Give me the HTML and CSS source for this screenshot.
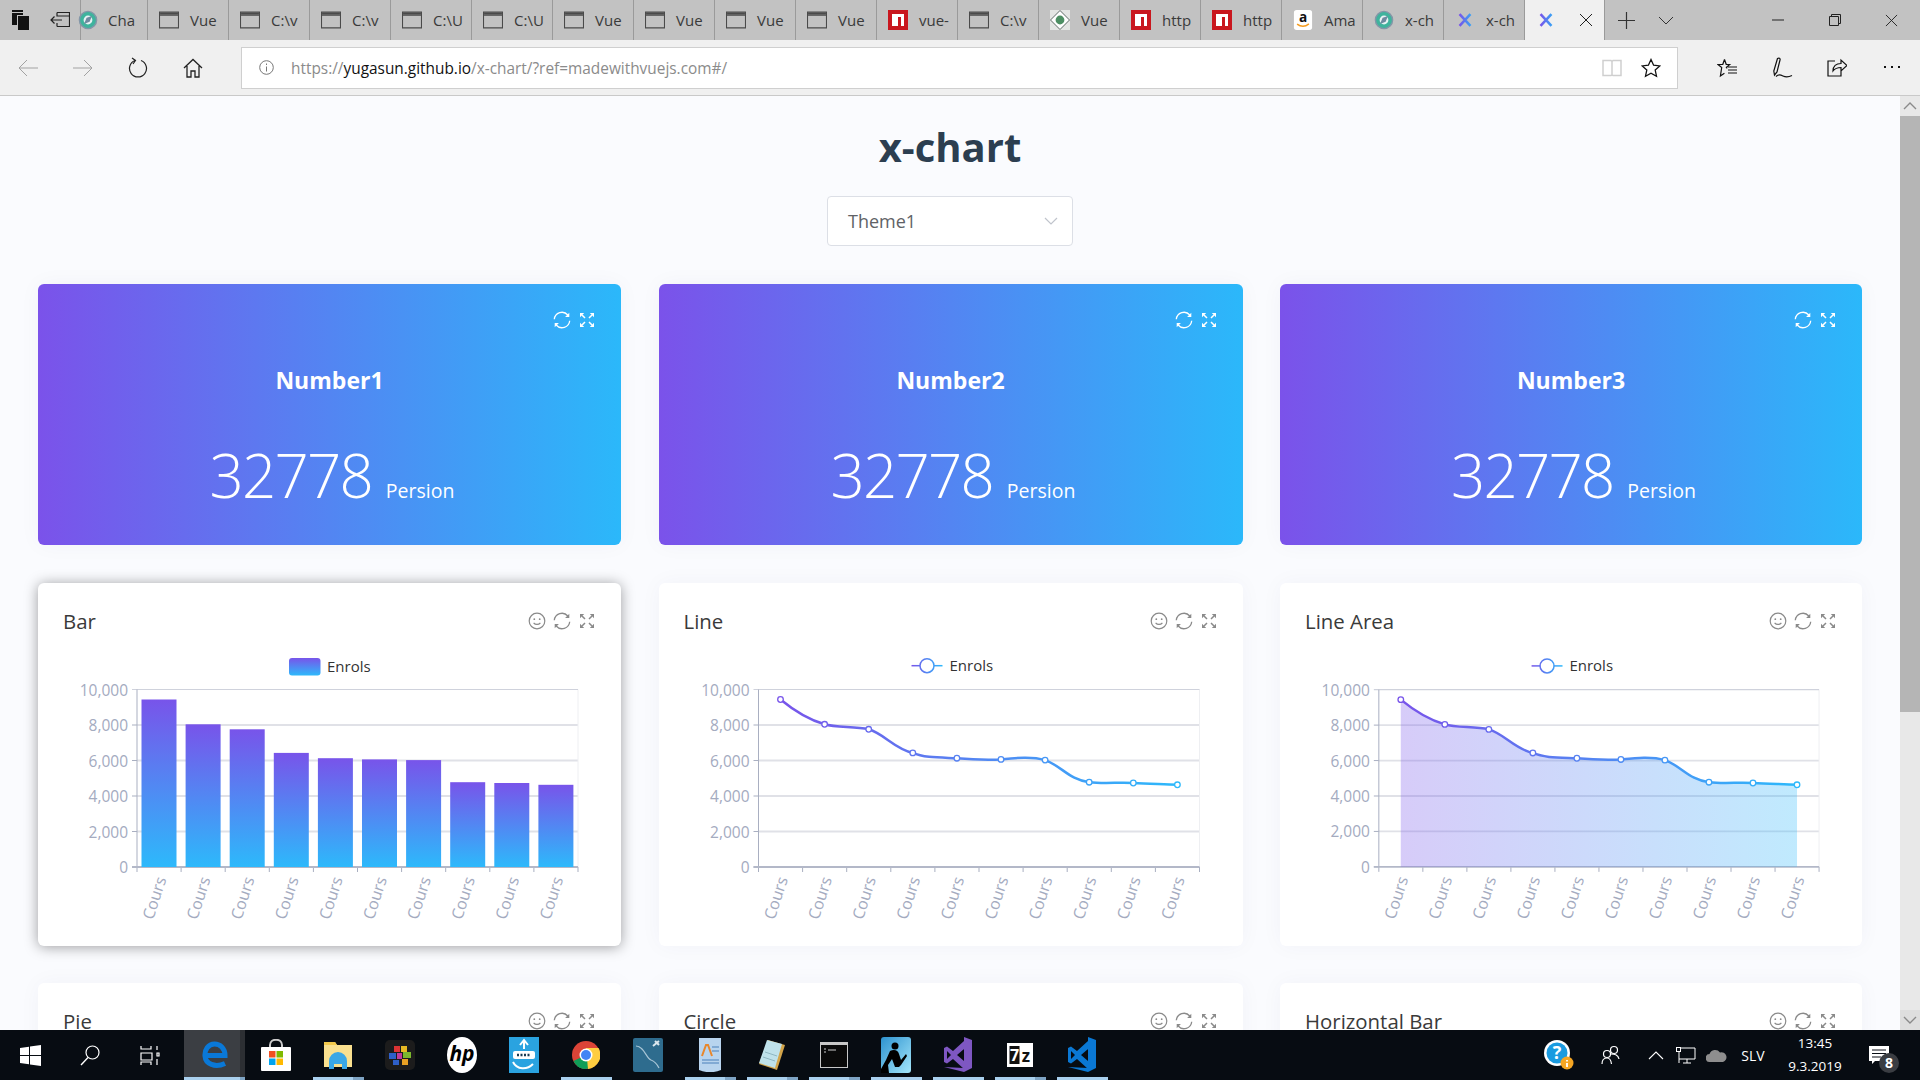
FILE: index.html
```html
<!DOCTYPE html>
<html lang="en">
<head>
    <meta charset="UTF-8">
    <meta name="viewport" content="width=device-width, initial-scale=1.0">
    <title>x-chart</title>
    <link rel="stylesheet" href="styles.css">
</head>
<body>

    <!-- shared icons and chart parts -->
    <svg class="defs" aria-hidden="true">
        <defs>
            <linearGradient id="g-bar" x1="0" y1="0" x2="0" y2="1">
                <stop offset="0" stop-color="#7854ea"/>
                <stop offset="1" stop-color="#2db9fb"/>
            </linearGradient>
            <linearGradient id="g-line" gradientUnits="userSpaceOnUse" x1="121" y1="0" x2="518" y2="0">
                <stop offset="0" stop-color="#7854ea"/>
                <stop offset="1" stop-color="#2db9fb"/>
            </linearGradient>
            <linearGradient id="g-area" gradientUnits="userSpaceOnUse" x1="121" y1="0" x2="518" y2="0">
                <stop offset="0" stop-color="#7854ea" stop-opacity=".3"/>
                <stop offset="1" stop-color="#2db9fb" stop-opacity=".3"/>
            </linearGradient>
            <linearGradient id="g-legend" gradientUnits="userSpaceOnUse" x1="252" y1="0" x2="283" y2="0">
                <stop offset="0" stop-color="#7854ea"/>
                <stop offset="1" stop-color="#2db9fb"/>
            </linearGradient>
            <linearGradient id="g-x" x1="0" y1="0" x2="1" y2="0">
                <stop offset="0" stop-color="#7854ea"/>
                <stop offset="1" stop-color="#3a9ff5"/>
            </linearGradient>

            <symbol id="i-smile" viewBox="0 0 18 18">
                <circle cx="9" cy="9" r="7.8" fill="none" stroke="currentColor" stroke-width="1.2"/>
                <circle cx="6.3" cy="7.2" r=".9" fill="currentColor"/>
                <circle cx="11.7" cy="7.2" r=".9" fill="currentColor"/>
                <path d="M5.6 10.8c1.8 2.2 5 2.2 6.8 0" fill="none" stroke="currentColor" stroke-width="1.2"/>
            </symbol>
            <symbol id="i-refresh" viewBox="0 0 18 18">
                <path d="M1.300 8.300A7.700 7.700 0 0 1 14.800 4M16.700 9.700A7.700 7.700 0 0 1 3.200 14" fill="none" stroke="currentColor" stroke-width="1.300"/>
                <path d="M16.300 1.800v4.200h-4.200zM1.700 16.200V12h4.200z" fill="currentColor"/>
            </symbol>
            <symbol id="i-expand" viewBox="0 0 18 18">
                <path d="M2 2h4.200L2 6.200zM16 2v4.200L11.800 2zM2 16v-4.200L6.200 16zM16 16h-4.200l4.200-4.200z" fill="currentColor"/>
                <path d="M4 4l3 3M14 4l-3 3M4 14l3-3M14 14l-3-3" fill="none" stroke="currentColor" stroke-width="1.500"/>
            </symbol>

            <symbol id="i-win" viewBox="0 0 19 16">
                <path d="M.5.5h18v15H.5zM.5 3.500h18" fill="none" stroke="#4a4a4a" stroke-width="1"/>
                <path d="M1 1h17v2H1z" fill="#4a4a4a"/>
            </symbol>
            <symbol id="i-npm" viewBox="0 0 20 20">
                <path d="M0 0h20v20H0z" fill="#c9171e"/>
                <path d="M4 4h12v12h-3V7h-3v9H4z" fill="#fff"/>
            </symbol>
            <symbol id="i-compass" viewBox="0 0 20 20">
                <circle cx="10" cy="10" r="8.6" fill="#3fb39d" stroke="#8496a8" stroke-width="1.4"/>
                <circle cx="10" cy="10" r="4.4" fill="#e8f2f4"/>
                <path d="M6 14l2.600-6.200L14 6l-2.400 5.800z" fill="#6f8aa0"/>
            </symbol>
            <symbol id="i-diamond" viewBox="0 0 20 20">
                <path d="M0 0h20v20H0z" fill="#e4e6e4"/>
                <path d="M10 .5l9.500 9.500-9.500 9.500L.5 10z" fill="#fff" stroke="#5f6b66"/>
                <circle cx="10" cy="10" r="4.400" fill="#4d8f63"/>
            </symbol>
            <symbol id="i-amazon" viewBox="0 0 20 22">
                <rect width="20" height="22" rx="3" fill="#fff"/>
                <text x="10" y="13.5" text-anchor="middle" class="amazon-a">a</text>
                <path d="M3.500 15.500c4 3 9 3 13-.2" fill="none" stroke="#f59b1d" stroke-width="1.600"/>
            </symbol>
            <symbol id="i-x" viewBox="-3 -3 22 22">
                <path d="M2 1.500l12 13M14 1.500L2 14.500" fill="none" stroke="url(#g-x)" stroke-width="2.800"/>
            </symbol>
            <symbol id="i-cross" viewBox="0 0 14 14">
                <path d="M1 1l12 12M13 1L1 13" fill="none" stroke="#222" stroke-width="1"/>
            </symbol>

            <g id="axes">
                <path d="M99 91H540M99 126.500H540M99 162H540M99 197.500H540" fill="none" stroke="#e0e1e7" stroke-width="1.800"/>
                <path d="M540 55.500V233" fill="none" stroke="#eeeff2"/>
                <path d="M94 55.500H540" fill="none" stroke="#cfd2dc" stroke-width="1.200"/>
                <path d="M99 55.500V238M94 91H99M94 126.500H99M94 162H99M94 197.500H99M94 233H99M143.100 233v5M187.200 233v5M231.300 233v5M275.400 233v5M319.500 233v5M363.600 233v5M407.700 233v5M451.800 233v5M495.900 233v5M540 233v5" fill="none" stroke="#a9afc1"/>
                <path d="M94 233H540" fill="none" stroke="#b3b8c8" stroke-width="1.800"/>
                <text x="90" y="61.500" class="tick end">10,000</text>
                <text x="90" y="97" class="tick end">8,000</text>
                <text x="90" y="132.500" class="tick end">6,000</text>
                <text x="90" y="168" class="tick end">4,000</text>
                <text x="90" y="203.500" class="tick end">2,000</text>
                <text x="90" y="239" class="tick end">0</text>
                <text transform="translate(128.500 245) rotate(-72)" class="tick end cat">Cours</text>
                <text transform="translate(172.600 245) rotate(-72)" class="tick end cat">Cours</text>
                <text transform="translate(216.700 245) rotate(-72)" class="tick end cat">Cours</text>
                <text transform="translate(260.800 245) rotate(-72)" class="tick end cat">Cours</text>
                <text transform="translate(304.900 245) rotate(-72)" class="tick end cat">Cours</text>
                <text transform="translate(349 245) rotate(-72)" class="tick end cat">Cours</text>
                <text transform="translate(393.100 245) rotate(-72)" class="tick end cat">Cours</text>
                <text transform="translate(437.200 245) rotate(-72)" class="tick end cat">Cours</text>
                <text transform="translate(481.300 245) rotate(-72)" class="tick end cat">Cours</text>
                <text transform="translate(525.400 245) rotate(-72)" class="tick end cat">Cours</text>
            </g>
            <g id="line-legend">
                <path d="M252 31.700h31" stroke="url(#g-legend)" stroke-width="1.500"/>
                <circle cx="267.500" cy="31.700" r="7" fill="#fff" stroke="url(#g-legend)" stroke-width="1.500"/>
                <text x="290" y="37" class="legend">Enrols</text>
            </g>
            <g id="line-points" fill="#fff" stroke="url(#g-line)" stroke-width="1.300">
                <circle cx="121" cy="65.500" r="2.800"/>
                <circle cx="165.100" cy="90.300" r="2.800"/>
                <circle cx="209.200" cy="95.300" r="2.800"/>
                <circle cx="253.300" cy="118.900" r="2.800"/>
                <circle cx="297.400" cy="124.200" r="2.800"/>
                <circle cx="341.500" cy="125.400" r="2.800"/>
                <circle cx="385.600" cy="126.100" r="2.800"/>
                <circle cx="429.700" cy="148.200" r="2.800"/>
                <circle cx="473.800" cy="149" r="2.800"/>
                <circle cx="517.900" cy="150.800" r="2.800"/>
            </g>
        </defs>
    </svg>

    <div class="tabbar">
        <div class="tab-tool">
            <svg width="17" height="20" viewBox="0 0 17 20"><path d="M0 0h11v2H0zM0 3h11v2H5v10H0z" fill="#111"/><path d="M6 6h11v14H6zM6 6h11v2H6z" fill="#111"/></svg>
        </div>
        <div class="tab-tool">
            <svg width="20" height="16" viewBox="0 0 20 16"><path d="M7 .5h12.500v14H7M7 .5v4M7 11v3.500M7 4h12.500M12 8H1M4.500 4.500L1 8l3.500 3.500" fill="none" stroke="#222" stroke-width="1.200"/></svg>
        </div>
        <div class="tab tab-first"><svg class="tab-icon"><use href="#i-compass"/></svg><span>Cha</span></div>
        <div class="tab"><svg class="tab-icon"><use href="#i-win"/></svg><span>Vue</span></div>
        <div class="tab"><svg class="tab-icon"><use href="#i-win"/></svg><span>C:\v</span></div>
        <div class="tab"><svg class="tab-icon"><use href="#i-win"/></svg><span>C:\v</span></div>
        <div class="tab"><svg class="tab-icon"><use href="#i-win"/></svg><span>C:\U</span></div>
        <div class="tab"><svg class="tab-icon"><use href="#i-win"/></svg><span>C:\U</span></div>
        <div class="tab"><svg class="tab-icon"><use href="#i-win"/></svg><span>Vue</span></div>
        <div class="tab"><svg class="tab-icon"><use href="#i-win"/></svg><span>Vue</span></div>
        <div class="tab"><svg class="tab-icon"><use href="#i-win"/></svg><span>Vue</span></div>
        <div class="tab"><svg class="tab-icon"><use href="#i-win"/></svg><span>Vue</span></div>
        <div class="tab"><svg class="tab-icon"><use href="#i-npm"/></svg><span>vue-</span></div>
        <div class="tab"><svg class="tab-icon"><use href="#i-win"/></svg><span>C:\v</span></div>
        <div class="tab"><svg class="tab-icon"><use href="#i-diamond"/></svg><span>Vue</span></div>
        <div class="tab"><svg class="tab-icon"><use href="#i-npm"/></svg><span>http</span></div>
        <div class="tab"><svg class="tab-icon"><use href="#i-npm"/></svg><span>http</span></div>
        <div class="tab"><svg class="tab-icon"><use href="#i-amazon"/></svg><span>Ama</span></div>
        <div class="tab"><svg class="tab-icon"><use href="#i-compass"/></svg><span>x-ch</span></div>
        <div class="tab"><svg class="tab-icon"><use href="#i-x"/></svg><span>x-ch</span></div>
        <div class="tab tab-active">
            <svg class="tab-icon"><use href="#i-x"/></svg>
            <svg class="tab-close"><use href="#i-cross"/></svg>
        </div>
        <div class="tab-tool tab-new">
            <svg width="17" height="17" viewBox="0 0 17 17"><path d="M0 8.500h17M8.500 0v17" stroke="#333" stroke-width="1.200"/></svg>
        </div>
        <div class="tab-tool">
            <svg width="16" height="9" viewBox="0 0 16 9"><path d="M1 1l7 7 7-7" fill="none" stroke="#333" stroke-width="1"/></svg>
        </div>
        <div class="win-controls">
            <div class="win-btn"><svg width="12" height="2" viewBox="0 0 12 2"><path d="M0 1h12" stroke="#222"/></svg></div>
            <div class="win-btn"><svg width="12" height="12" viewBox="0 0 12 12"><path d="M.5 2.500h9v9h-9zM2.500 2.500v-2h9v9h-2" fill="none" stroke="#222"/></svg></div>
            <div class="win-btn"><svg width="13" height="13"><use href="#i-cross"/></svg></div>
        </div>
    </div>

    <div class="toolbar">
        <div class="tool-btn">
            <svg width="20" height="18" viewBox="0 0 20 18"><path d="M20 9H1M9 1L1 9l8 8" fill="none" stroke="#a2a2a2"/></svg>
        </div>
        <div class="tool-btn">
            <svg width="20" height="18" viewBox="0 0 20 18"><path d="M0 9h19M11 1l8 8-8 8" fill="none" stroke="#a2a2a2"/></svg>
        </div>
        <div class="tool-btn">
            <svg width="20" height="22" viewBox="0 0 20 22"><path d="M13 3.500a8.500 8.500 0 1 1-6 0M4 1l3.500 2.500L5 7" fill="none" stroke="#222" stroke-width="1.200"/></svg>
        </div>
        <div class="tool-btn">
            <svg width="20" height="20" viewBox="0 0 20 20"><path d="M1 10l9-8.500 9 8.500M4 8v11h4v-6h4v6h4V8" fill="none" stroke="#222" stroke-width="1.300"/></svg>
        </div>
        <div class="urlbar">
            <svg class="url-info" width="15" height="15" viewBox="0 0 15 15"><circle cx="7.500" cy="7.500" r="6.800" fill="none" stroke="#777"/><path d="M7.500 6.500v5M7.500 3.500v1.500" stroke="#777"/></svg>
            <div class="url-text">https://<b>yugasun.github.io</b>/x-chart/?ref=madewithvuejs.com#/</div>
            <svg class="url-read" width="20" height="18" viewBox="0 0 20 18"><path d="M1 1.500h8l1 1 1-1h8v15h-8l-1-.5-1 .5H1zM10 2.500V16" fill="none" stroke="#cfcfcf" stroke-width="1.500"/></svg>
            <svg class="url-star" width="20" height="20" viewBox="0 0 20 20"><path d="M10 1.500l2.600 5.700 6.200.7-4.600 4.200 1.300 6.100L10 15.200l-5.500 3 1.300-6.100-4.600-4.200 6.200-.7z" fill="none" stroke="#111" stroke-width="1.300"/></svg>
        </div>
        <div class="tool-btn tool-first">
            <svg width="20" height="20" viewBox="0 0 20 20"><path d="M7.500 1.500l1.700 4.800 3.500.2-3.300 2.800.8 1M7.500 1.500L5.800 6.300 1 6.500l3.700 3L3.400 18l4-2.800M11 9h9M11 12h9M11 15h9" fill="none" stroke="#111" stroke-width="1.200"/></svg>
        </div>
        <div class="tool-btn">
            <svg width="22" height="22" viewBox="0 0 22 22"><path d="M6.500 1.500c1.500-1 3 0 2.500 1.500L6 15l-2.500 3-.7-4zM5 19.500c3-3 5-1.500 7-.5s5 1.500 9-.5" fill="none" stroke="#111" stroke-width="1.200"/></svg>
        </div>
        <div class="tool-btn">
            <svg width="20" height="20" viewBox="0 0 20 20"><path d="M8 3H1v15h13v-5M6 13c0-5 3-7.500 8-7.500V2l6 5.500-6 5.500V9.500c-3 0-6 1-8 3.500z" fill="none" stroke="#111" stroke-width="1.200"/></svg>
        </div>
        <div class="tool-btn">
            <svg width="16" height="3" viewBox="0 0 16 3"><path d="M0 0h2v2H0zM7 0h2v2H7zM14 0h2v2h-2z" fill="#111"/></svg>
        </div>
    </div>

    <div class="viewport">
        <main class="page">
            <h1 class="page-title">x-chart</h1>
            <div class="theme-select">
                <span>Theme1</span>
                <svg width="14" height="8" viewBox="0 0 14 8"><path d="M1 1l6 6 6-6" fill="none" stroke="#c0c4cc" stroke-width="1.200"/></svg>
            </div>

            <div class="card-grid">
                <section class="card number-card">
                    <div class="card-icons">
                        <svg class="ico"><use href="#i-refresh"/></svg>
                        <svg class="ico"><use href="#i-expand"/></svg>
                    </div>
                    <h3 class="number-title">Number1</h3>
                    <div class="number-value">32778<span class="number-unit">Persion</span></div>
                </section>
                <section class="card number-card">
                    <div class="card-icons">
                        <svg class="ico"><use href="#i-refresh"/></svg>
                        <svg class="ico"><use href="#i-expand"/></svg>
                    </div>
                    <h3 class="number-title">Number2</h3>
                    <div class="number-value">32778<span class="number-unit">Persion</span></div>
                </section>
                <section class="card number-card">
                    <div class="card-icons">
                        <svg class="ico"><use href="#i-refresh"/></svg>
                        <svg class="ico"><use href="#i-expand"/></svg>
                    </div>
                    <h3 class="number-title">Number3</h3>
                    <div class="number-value">32778<span class="number-unit">Persion</span></div>
                </section>

                <section class="card chart-card card-hover">
                    <div class="chart-head">
                        <h3>Bar</h3>
                        <div class="card-icons">
                            <svg class="ico"><use href="#i-smile"/></svg>
                            <svg class="ico"><use href="#i-refresh"/></svg>
                            <svg class="ico"><use href="#i-expand"/></svg>
                        </div>
                    </div>
                    <svg class="chart" viewBox="0 0 583 312">
                        <use href="#axes"/>
                        <rect x="251" y="24" width="31.500" height="17.500" rx="3" fill="url(#g-bar)"/>
                        <text x="289" y="38" class="legend">Enrols</text>
                        <g fill="url(#g-bar)">
                            <rect x="103.500" y="65.500" width="35" height="167.500"/>
                            <rect x="147.600" y="90.300" width="35" height="142.700"/>
                            <rect x="191.700" y="95.300" width="35" height="137.700"/>
                            <rect x="235.800" y="118.900" width="35" height="114.100"/>
                            <rect x="279.900" y="124.200" width="35" height="108.800"/>
                            <rect x="324" y="125.400" width="35" height="107.600"/>
                            <rect x="368.100" y="126.100" width="35" height="106.900"/>
                            <rect x="412.200" y="148.200" width="35" height="84.800"/>
                            <rect x="456.300" y="149" width="35" height="84"/>
                            <rect x="500.400" y="150.800" width="35" height="82.200"/>
                        </g>
                    </svg>
                </section>

                <section class="card chart-card">
                    <div class="chart-head">
                        <h3>Line</h3>
                        <div class="card-icons">
                            <svg class="ico"><use href="#i-smile"/></svg>
                            <svg class="ico"><use href="#i-refresh"/></svg>
                            <svg class="ico"><use href="#i-expand"/></svg>
                        </div>
                    </div>
                    <svg class="chart" viewBox="0 0 583 312">
                        <use href="#axes"/>
                        <use href="#line-legend"/>
                        <path d="M121 65.500C135 77 150 86 165.100 90.300C177 94 195 92 209.200 95.300C225 100 235 115 253.300 118.900C265 124 280 123.500 297.400 124.200C312 125.500 328 126 341.500 125.400C355 124 372 122 385.600 126.100C402 132 410 146 429.700 148.200C445 150 460 148 473.800 149C490 150 505 150 517.900 150.800" fill="none" stroke="url(#g-line)" stroke-width="2.500"/>
                        <use href="#line-points"/>
                    </svg>
                </section>

                <section class="card chart-card">
                    <div class="chart-head">
                        <h3>Line Area</h3>
                        <div class="card-icons">
                            <svg class="ico"><use href="#i-smile"/></svg>
                            <svg class="ico"><use href="#i-refresh"/></svg>
                            <svg class="ico"><use href="#i-expand"/></svg>
                        </div>
                    </div>
                    <svg class="chart" viewBox="0 0 583 312">
                        <use href="#axes"/>
                        <use href="#line-legend"/>
                        <path d="M121 65.500C135 77 150 86 165.100 90.300C177 94 195 92 209.200 95.300C225 100 235 115 253.300 118.900C265 124 280 123.500 297.400 124.200C312 125.500 328 126 341.500 125.400C355 124 372 122 385.600 126.100C402 132 410 146 429.700 148.200C445 150 460 148 473.800 149C490 150 505 150 517.900 150.800V233H121Z" fill="url(#g-area)"/>
                        <path d="M121 65.500C135 77 150 86 165.100 90.300C177 94 195 92 209.200 95.300C225 100 235 115 253.300 118.900C265 124 280 123.500 297.400 124.200C312 125.500 328 126 341.500 125.400C355 124 372 122 385.600 126.100C402 132 410 146 429.700 148.200C445 150 460 148 473.800 149C490 150 505 150 517.900 150.800" fill="none" stroke="url(#g-line)" stroke-width="2.500"/>
                        <use href="#line-points"/>
                    </svg>
                </section>

                <section class="card chart-card">
                    <div class="chart-head">
                        <h3>Pie</h3>
                        <div class="card-icons">
                            <svg class="ico"><use href="#i-smile"/></svg>
                            <svg class="ico"><use href="#i-refresh"/></svg>
                            <svg class="ico"><use href="#i-expand"/></svg>
                        </div>
                    </div>
                </section>
                <section class="card chart-card">
                    <div class="chart-head">
                        <h3>Circle</h3>
                        <div class="card-icons">
                            <svg class="ico"><use href="#i-smile"/></svg>
                            <svg class="ico"><use href="#i-refresh"/></svg>
                            <svg class="ico"><use href="#i-expand"/></svg>
                        </div>
                    </div>
                </section>
                <section class="card chart-card">
                    <div class="chart-head">
                        <h3>Horizontal Bar</h3>
                        <div class="card-icons">
                            <svg class="ico"><use href="#i-smile"/></svg>
                            <svg class="ico"><use href="#i-refresh"/></svg>
                            <svg class="ico"><use href="#i-expand"/></svg>
                        </div>
                    </div>
                </section>
            </div>
        </main>

        <div class="scrollbar">
            <div class="scroll-btn"><svg width="14" height="8" viewBox="0 0 14 8"><path d="M1 7l6-6 6 6" fill="none" stroke="#8a8a8a" stroke-width="1.400"/></svg></div>
            <div class="scroll-thumb"></div>
            <div class="scroll-track"></div>
            <div class="scroll-btn scroll-btn-down"><svg width="14" height="8" viewBox="0 0 14 8"><path d="M1 1l6 6 6-6" fill="none" stroke="#8a8a8a" stroke-width="1.400"/></svg></div>
        </div>
    </div>

    <div class="taskbar">
        <div class="sys-btn">
            <svg width="21" height="21" viewBox="0 0 21 21"><path d="M0 3l9-1.300v8.300H0zM10 1.500L21 0v10H10zM0 11h9v8.300L0 18zM10 11h11v10l-11-1.500z" fill="#fff"/></svg>
        </div>
        <div class="sys-btn">
            <svg width="20" height="21" viewBox="0 0 20 21"><circle cx="12.500" cy="7.500" r="6.500" fill="none" stroke="#fff" stroke-width="1.200"/><path d="M8 12.500L1 20" stroke="#fff" stroke-width="1.400"/></svg>
        </div>
        <div class="sys-btn">
            <svg width="20" height="19" viewBox="0 0 20 19"><path d="M1 0v3h10V0M1 7h11v7H1zM1 19v-3h10v3M17 0v4M17 7v3h2V7zM17 13v6" fill="none" stroke="#fff" stroke-width="1.200"/></svg>
        </div>

        <div class="app app-edge on">
            <svg width="26" height="28" viewBox="0 0 26 28"><path d="M5 14.500h18C23 7 18 3 12.500 3 6 3 2.500 9 3 15c.5 8 10 12 20 7.500" fill="none" stroke="#0a78d7" stroke-width="5"/></svg>
        </div>
        <div class="app">
            <svg width="30" height="32" viewBox="0 0 30 32"><path d="M9 9V6c0-7 12-7 12 0v3" fill="none" stroke="#ccc" stroke-width="2"/><rect y="8" width="30" height="24" rx="1" fill="#fff"/><path d="M8 12h6.500v6.500H8z" fill="#f25022"/><path d="M15.500 12H22v6.500h-6.500z" fill="#7fba00"/><path d="M8 19.500h6.500V26H8z" fill="#00a4ef"/><path d="M15.500 19.500H22V26h-6.500z" fill="#ffb900"/></svg>
        </div>
        <div class="app on split">
            <svg width="28" height="28" viewBox="0 0 28 28"><path d="M0 1h11l2 3h15v22H0z" fill="#f9e08f"/><path d="M0 1h11l2 3H0z" fill="#f2c94c"/><path d="M5 28v-8a9 9 0 0 1 18 0v8h-5v-5h-8v5z" fill="#3aa7e6"/></svg>
        </div>
        <div class="app">
            <svg width="30" height="30" viewBox="0 0 30 30"><rect width="30" height="30" rx="5" fill="#1c1c1c"/><path d="M9 6h6v6H9z" fill="#d33"/><path d="M16 6h6v6h-6z" fill="#e8b923"/><path d="M4 13h7v6H4z" fill="#2e5fc7"/><path d="M12 13h5v6h-5z" fill="#c03a9a"/><path d="M18 12h8v6h-8z" fill="#7ab82e"/><path d="M8 20h6v5H8z" fill="#2e5fc7"/><path d="M17 19h6v6h-6z" fill="#e8a023"/></svg>
        </div>
        <div class="app">
            <svg width="30" height="36" viewBox="0 0 30 36"><ellipse cx="15" cy="18" rx="15" ry="18" fill="#fff"/><text x="15" y="24" text-anchor="middle" class="hp-text">hp</text></svg>
        </div>
        <div class="app">
            <svg width="30" height="36" viewBox="0 0 30 36"><rect width="30" height="36" fill="#2aa3e0"/><rect x="4" y="14" width="22" height="8" rx="2" fill="#fff"/><path d="M8 18h14" stroke="#1a3a52" stroke-width="2.500" stroke-dasharray="2 1.500"/><path d="M15 12V4M11 8l4-5 4 5" fill="none" stroke="#fff" stroke-width="2"/><path d="M4 25c4 8 14 8 20 2" fill="none" stroke="#fff" stroke-width="2"/></svg>
        </div>
        <div class="app on">
            <svg width="28" height="28" viewBox="0 0 28 28"><circle cx="14" cy="14" r="14" fill="#db4437"/><path d="M14 14L26 20A14 14 0 0 1 5 25z" fill="#0f9d58"/><path d="M14 7h12.500A14 14 0 0 1 16 28z" fill="#ffcd40"/><path d="M14 14L1.500 20A14 14 0 0 0 14 28z" fill="#0f9d58"/><circle cx="14" cy="14" r="6.500" fill="#fff"/><circle cx="14" cy="14" r="5" fill="#4285f4"/></svg>
        </div>
        <div class="app">
            <svg width="30" height="34" viewBox="0 0 30 34"><rect width="30" height="34" rx="2" fill="#2e6c8e"/><path d="M3 8c8 0 10 12 15 14 3 1 6 4 8 8" fill="none" stroke="#a9c6d6" stroke-width="1.200"/><path d="M20 8l6-5M22 3l4 4" stroke="#dbe7ee" stroke-width="2"/></svg>
        </div>
        <div class="app on split">
            <svg width="26" height="34" viewBox="0 0 26 34"><path d="M2 0h22v32c-7 3-15 3-22 0z" fill="#b8d4ee"/><path d="M5 18l4-11h2l4 11" fill="none" stroke="#e8872c" stroke-width="2"/><path d="M15 9h7M15 13h7M5 22h17M5 25h17" stroke="#6f9ccc" stroke-width="1.500"/></svg>
        </div>
        <div class="app on split">
            <svg width="26" height="30" viewBox="0 0 26 30"><path d="M9 0l17 5-8 25L0 24z" fill="#d3a54a"/><path d="M8 0l15 4-7 24L0 23z" fill="#bfe2ea"/><path d="M6 12l12 4M4 17l12 4" stroke="#8fb7c1"/></svg>
        </div>
        <div class="app on split">
            <svg width="28" height="26" viewBox="0 0 28 26"><rect width="28" height="26" fill="#c8c8c8"/><rect x="1" y="3" width="26" height="22" fill="#0a0a0a"/><path d="M4 7h2M4 10h2M8 8h8" stroke="#ccc"/></svg>
        </div>
        <div class="app on">
            <svg width="30" height="36" viewBox="0 0 30 36"><defs><linearGradient id="g-kindle" x1="0" y1="0" x2="1" y2="1"><stop offset="0" stop-color="#2d93d0"/><stop offset="1" stop-color="#a4e6fa"/></linearGradient></defs><rect width="30" height="36" rx="3" fill="url(#g-kindle)"/><circle cx="14" cy="9" r="3.500" fill="#000"/><path d="M9 14c4-2 8-1 9 3l2 6 5-6 1 2-6 9-2 2h-4l-3-8-4 6 1 8H0v-4l5-9z" fill="#000"/></svg>
        </div>
        <div class="app on">
            <svg width="30" height="36" viewBox="0 0 30 36"><path d="M21 0l8 3v28l-8 4L1 30l20 1V4z" fill="#7e57c2"/><path d="M1 11l3-1.500 6 4.500 11-10v28L10 22 4 26.500 1 25zM4 14v8l4-4zM21 12l-7 6 7 6z" fill-rule="evenodd" fill="#7e57c2"/></svg>
        </div>
        <div class="app on split">
            <svg width="26" height="24" viewBox="0 0 26 24"><rect width="26" height="24" fill="#fff"/><rect x="2.500" y="3" width="10" height="18" fill="#111"/><text x="7.500" y="18" text-anchor="middle" class="zip-7">7</text><text x="19" y="19" text-anchor="middle" class="zip-z">z</text></svg>
        </div>
        <div class="app on">
            <svg width="30" height="36" viewBox="0 0 30 36"><path d="M21 0l8 3v28l-8 4L1 30l20 1V4z" fill="#0a78d4"/><path d="M1 11l3-1.500 6 4.500 11-10v28L10 22 4 26.500 1 25zM4 14v8l4-4zM21 12l-7 6 7 6z" fill-rule="evenodd" fill="#0a78d4"/></svg>
        </div>

        <div class="tray">
            <div class="tray-item tray-help">
                <svg width="30" height="30" viewBox="0 0 30 30"><circle cx="13" cy="13" r="13" fill="#fff"/><circle cx="13" cy="13" r="10.500" fill="#1a9be0"/><text x="13" y="19" text-anchor="middle" class="help-q">?</text><circle cx="23" cy="23" r="6.500" fill="#f5a623"/><path d="M23 20v1.500M23 23v4" stroke="#fff" stroke-width="1.800"/></svg>
            </div>
            <div class="tray-item tray-help">
                <svg width="20" height="20" viewBox="0 0 20 20"><circle cx="13" cy="5" r="3.500" fill="none" stroke="#fff" stroke-width="1.200"/><circle cx="6" cy="9" r="3.500" fill="none" stroke="#fff" stroke-width="1.200"/><path d="M1 19c0-4 2-6 5-6 2 0 4 2 4.500 6M10 9c3 0 7 0 8 5" fill="none" stroke="#fff" stroke-width="1.200"/></svg>
            </div>
            <div class="tray-item tray-chevron">
                <svg width="16" height="9" viewBox="0 0 16 9"><path d="M1 8l7-7 7 7" fill="none" stroke="#fff" stroke-width="1.100"/></svg>
            </div>
            <div class="tray-item tray-small">
                <svg width="20" height="17" viewBox="0 0 20 17"><path d="M3 1h16v11H3zM7 16h8M11 12v4M3 12v4" fill="none" stroke="#fff"/><rect x="0.500" y="0.500" width="4" height="4" fill="#0a0f16" stroke="#fff"/></svg>
            </div>
            <div class="tray-item tray-small">
                <svg width="21" height="13" viewBox="0 0 21 13"><path d="M4 13a4 4 0 0 1-.5-8A6 6 0 0 1 14 3.500 4.500 4.500 0 0 1 17 13z" fill="#8e8e8e"/></svg>
            </div>
            <div class="tray-item tray-lang">SLV</div>
            <div class="tray-clock">
                <div>13:45</div>
                <div>9.3.2019</div>
            </div>
            <div class="tray-note">
                <svg width="20" height="19" viewBox="0 0 20 19"><path d="M0 0h20v15H6l-3 3v-3H0z" fill="#fff"/><path d="M3 4h14M3 7.500h14M3 11h9" stroke="#0a0f16"/></svg>
                <span class="note-badge">8</span>
            </div>
        </div>
    </div>

</body>
</html>
```

FILE: styles.css
```css
body {
    font-family: 'Open Sans', 'Noto Sans', sans-serif;
    margin: 0;
    padding: 0;
    height: 100vh;
    display: flex;
    flex-direction: column;
    overflow: hidden;
    background-color: #fafbfe;
    color: #333;
}
.defs {
    width: 0;
    height: 0;
    display: block;
}
h1, h3 {
    margin: 0;
}

/* browser tabs */
.tabbar {
    height: 40px;
    flex: none;
    display: flex;
    background-color: #c2c2c2;
}
.tab-tool {
    width: 40px;
    display: flex;
    align-items: center;
    justify-content: center;
}
.tab-new {
    margin-left: 1px;
}
.tab {
    width: 81px;
    box-sizing: border-box;
    flex: none;
    display: flex;
    align-items: center;
    padding-left: 11px;
    border-left: 1px solid #9a9a9a;
    font-size: 15px;
    color: #3a3a3a;
}
.tab span {
    margin-left: 11px;
    white-space: nowrap;
}
.tab-first {
    width: 67px;
    padding-left: 0;
}
.tab-first .tab-icon {
    margin-left: -3px;
}
.tab-first span {
    margin-left: 10px;
}
.tab-icon {
    width: 20px;
    height: 20px;
    flex: none;
}
.tab-active {
    background-color: #f0f0f0;
    border-right: 1px solid #9a9a9a;
    justify-content: space-between;
    padding-right: 11px;
    width: 81px;
}
.tab-close {
    width: 14px;
    height: 14px;
}
.win-controls {
    margin-left: auto;
    display: flex;
}
.win-btn {
    width: 57px;
    display: flex;
    align-items: center;
    justify-content: center;
}

/* address bar row */
.toolbar {
    height: 55px;
    flex: none;
    display: flex;
    align-items: center;
    background-color: #f0f0f0;
    border-bottom: 1px solid #c9c9c9;
}
.tool-btn {
    width: 55px;
    height: 100%;
    flex: none;
    display: flex;
    align-items: center;
    justify-content: center;
}
.tool-first {
    margin-left: 21px;
}
.urlbar {
    width: 1437px;
    height: 42px;
    box-sizing: border-box;
    margin-left: 21px;
    flex: none;
    display: flex;
    align-items: center;
    background-color: #fff;
    border: 1px solid #cfcfcf;
    font-size: 15.4px;
    color: #8b8b8b;
}
.url-info {
    margin-left: 17px;
    flex: none;
}
.url-text {
    margin-left: 17px;
    padding-top: 2px;
    flex: 1;
    white-space: nowrap;
}
.url-text b {
    font-weight: 400;
    color: #111;
}
.url-read {
    flex: none;
}
.url-star {
    margin: 0 16px 0 19px;
    flex: none;
}

/* page */
.viewport {
    flex: 1;
    min-height: 0;
    display: flex;
}
.page {
    flex: 1;
    min-width: 0;
    overflow: hidden;
    padding: 0 38px;
}
.page-title {
    height: 100px;
    line-height: 102px;
    font-size: 40px;
    font-weight: 700;
    text-align: center;
    color: #2c3e50;
}
.theme-select {
    width: 246px;
    height: 50px;
    box-sizing: border-box;
    margin: 0 auto 37.5px;
    padding: 0 14px 0 20px;
    display: flex;
    align-items: center;
    justify-content: space-between;
    background-color: #fff;
    border: 1px solid #dcdfe6;
    border-radius: 4px;
    font-size: 18px;
    color: #606266;
}
.card-grid {
    display: grid;
    grid-template-columns: 583px 584px 1fr;
    gap: 37.5px;
}
.card {
    border-radius: 6px;
    box-shadow: 0 0 22px rgba(20, 40, 90, 0.04);
}
.card-icons {
    display: flex;
    justify-content: flex-end;
    gap: 7px;
}
.ico {
    width: 18px;
    height: 18px;
}

.number-card {
    height: 261.5px;
    box-sizing: border-box;
    padding: 27px 25px 0;
    background-image: linear-gradient(to right, #7b52ea, #2bb8fa);
    color: #fff;
}
.number-title {
    margin-top: 34.5px;
    line-height: 34px;
    font-size: 23px;
    font-weight: 700;
    text-align: center;
}
.number-value {
    margin-top: 37px;
    padding-left: 5px;
    line-height: 82px;
    font-size: 60px;
    font-weight: 300;
    letter-spacing: -1.8px;
    text-align: center;
}
.number-unit {
    margin-left: 14px;
    font-size: 19.5px;
    font-weight: 400;
    letter-spacing: 0;
}

.chart-card {
    min-height: 363px;
    background-color: #fff;
    color: #8a8a8a;
}
.card-hover {
    box-shadow: 0 1px 14px rgba(0, 0, 0, 0.38);
}
.chart-head {
    height: 26px;
    padding: 25px 25px 0;
    display: flex;
    align-items: center;
    justify-content: space-between;
}
.chart-head h3 {
    font-size: 20.4px;
    font-weight: 400;
    color: #3a3a3a;
}
.chart {
    display: block;
    width: 100%;
    height: 312px;
}
.tick {
    font-size: 15.5px;
    fill: #a4abbf;
}
.cat {
    font-size: 16px;
}
.end {
    text-anchor: end;
}
.legend {
    font-size: 15px;
    fill: #333;
}

/* window scrollbar */
.scrollbar {
    width: 20px;
    flex: none;
    display: flex;
    flex-direction: column;
    background-color: #e8e8e8;
}
.scroll-btn {
    height: 20px;
    flex: none;
    display: flex;
    align-items: center;
    justify-content: center;
}
.scroll-btn-down {
    background-color: #dedede;
}
.scroll-thumb {
    height: 596px;
    flex: none;
    background-color: #b5b5b5;
}
.scroll-track {
    flex: 1;
}

/* windows taskbar */
.taskbar {
    height: 50px;
    flex: none;
    display: flex;
    background-color: #070c12;
    color: #fff;
}
.sys-btn {
    width: 60px;
    flex: none;
    display: flex;
    align-items: center;
    justify-content: center;
}
.app {
    width: 62px;
    flex: none;
    display: flex;
    align-items: center;
    justify-content: center;
    position: relative;
}
.app.on::after {
    content: "";
    position: absolute;
    left: 6px;
    right: 5px;
    bottom: 0;
    height: 3px;
    background-color: #a9d0ee;
}
.app.split::after {
    background-image: linear-gradient(to right, #a9d0ee 78%, #7ea4c4 78%);
}
.app-edge {
    width: 61px;
    margin-left: 4px;
    background-image: linear-gradient(to right, #3b3e43 91%, #2c2f33 91%);
}
.app-edge.on::after {
    left: 0;
    right: 0;
    background-image: linear-gradient(to right, #a9d0ee 91%, #7ea4c4 91%);
}
.hp-text {
    font-size: 21px;
    font-weight: 700;
    font-style: italic;
    fill: #000;
}
.zip-7 {
    font-size: 16px;
    font-weight: 700;
    fill: #fff;
}
.zip-z {
    font-size: 17px;
    font-weight: 700;
    fill: #111;
}
.help-q {
    font-size: 18px;
    font-weight: 700;
    fill: #fff;
}
.amazon-a {
    font-size: 15px;
    font-weight: 700;
    fill: #111;
}
.tray {
    margin-left: auto;
    padding-right: 17px;
    display: flex;
    align-items: center;
    font-size: 14px;
}
.tray-item {
    display: flex;
    align-items: center;
    justify-content: center;
    height: 100%;
}
.tray-help {
    width: 52px;
}
.tray-chevron {
    width: 30px;
    margin-left: 4px;
}
.tray-small {
    width: 30px;
}
.tray-lang {
    width: 44px;
    font-size: 14px;
}
.tray-clock {
    width: 80px;
    font-size: 13.5px;
    line-height: 23px;
    text-align: center;
}
.tray-note {
    width: 48px;
    height: 100%;
    display: flex;
    align-items: center;
    justify-content: center;
    position: relative;
}
.note-badge {
    position: absolute;
    left: 24px;
    top: 23px;
    width: 20px;
    height: 20px;
    border-radius: 50%;
    background-color: #3a3d42;
    font-size: 14px;
    font-weight: 700;
    line-height: 20px;
    text-align: center;
}
```
